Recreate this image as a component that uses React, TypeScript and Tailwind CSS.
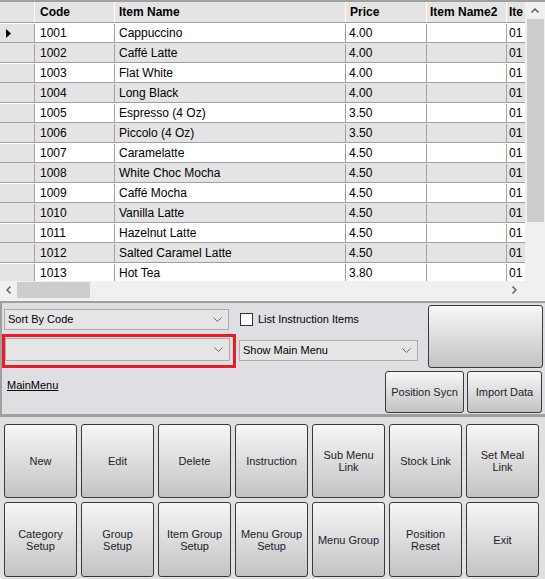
import React from 'react';

const items = [
  ['1001', 'Cappuccino', '4.00'],
  ['1002', 'Caffé Latte', '4.00'],
  ['1003', 'Flat White', '4.00'],
  ['1004', 'Long Black', '4.00'],
  ['1005', 'Espresso (4 Oz)', '3.50'],
  ['1006', 'Piccolo (4 Oz)', '3.50'],
  ['1007', 'Caramelatte', '4.50'],
  ['1008', 'White Choc Mocha', '4.50'],
  ['1009', 'Caffé Mocha', '4.50'],
  ['1010', 'Vanilla Latte', '4.50'],
  ['1011', 'Hazelnut Latte', '4.50'],
  ['1012', 'Salted Caramel Latte', '4.50'],
  ['1013', 'Hot Tea', '3.80'],
];

const buttons = [
  'New', 'Edit', 'Delete', 'Instruction', 'Sub Menu\nLink', 'Stock Link', 'Set Meal\nLink',
  'Category\nSetup', 'Group\nSetup', 'Item Group\nSetup', 'Menu Group\nSetup', 'Menu Group', 'Position\nReset', 'Exit',
];

const Chevron = () => (
  <svg width="9" height="6" viewBox="0 0 9 6">
    <path d="M0.5 0.5 L4.5 4.5 L8.5 0.5" fill="none" stroke="#6b6b6b" strokeWidth="1" />
  </svg>
);

const Combo: React.FC<{ text?: string; className: string }> = ({ text, className }) => (
  <div className={`flex items-center justify-between border border-[#acacac] bg-[#e5e5e5] pl-[3px] pr-[6px] text-[11px] text-black ${className}`}>
    <span>{text}</span>
    <Chevron />
  </div>
);

const WinButton: React.FC<{ label?: string; className: string }> = ({ label, className }) => (
  <div
    className={`flex items-center justify-center whitespace-pre-line rounded-[3px] border border-[#3a3a3a] bg-linear-to-b from-[#f7f7f7] to-[#c3c3c3] text-center text-[11px] leading-[12px] text-[#1e1a2a] ${className}`}
  >
    {label}
  </div>
);

const cell = 'flex shrink-0 items-center border-r border-b border-[#a0a0a0] overflow-hidden whitespace-nowrap';
const head = 'flex shrink-0 items-center border-r border-white overflow-hidden whitespace-nowrap font-bold';

const App: React.FC = () => {
  return (
    <div className="flex h-[579px] w-[545px] flex-col overflow-hidden bg-[#e0e0e3] font-['Liberation_Sans',Arial,sans-serif] text-black">
      {/* Data grid */}
      <div className="flex h-[281px] border-t-2 border-[#a0a0a0] bg-white">
        <div className="h-[279px] w-[525px] overflow-hidden text-[12px]">
          <div className="flex h-[21px] border-b border-[#a0a0a0] bg-[#e4e4e4]">
            <div className={`${head} w-[35px]`} />
            <div className={`${head} w-[80px] pl-[5px]`}>Code</div>
            <div className={`${head} w-[231px] pl-[4px]`}>Item Name</div>
            <div className={`${head} w-[81px] pl-[4px]`}>Price</div>
            <div className={`${head} w-[80px] pl-[3px]`}>Item Name2</div>
            <div className={`${head} w-[18px] border-r-0 pl-[2px]`}>Ite</div>
          </div>
          {items.map(([code, name, price], i) => (
            <div key={code} className={`flex h-[20px] pt-[1px] ${i % 2 ? 'bg-[#e4e4e4]' : 'bg-white'}`}>
              <div className={`${cell} w-[35px] bg-[#e4e4e4] pl-[6px]`}>
                {i === 0 && (
                  <svg width="5" height="9" viewBox="0 0 5 9">
                    <path d="M0 0 L5 4.5 L0 9 Z" fill="#000" />
                  </svg>
                )}
              </div>
              <div className={`${cell} w-[80px] pl-[5px]`}>{code}</div>
              <div className={`${cell} w-[231px] pl-[4px]`}>{name}</div>
              <div className={`${cell} w-[81px] pl-[3px]`}>{price}</div>
              <div className={`${cell} w-[80px]`} />
              <div className={`${cell} w-[18px] border-r-0 pl-[2px]`}>01</div>
            </div>
          ))}
        </div>
        {/* vertical scrollbar */}
        <div className="flex h-[279px] w-[20px] flex-col items-center bg-[#f0f0f0]">
          <div className="flex h-[17px] items-center justify-center">
            <svg width="8" height="5" viewBox="0 0 8 5">
              <path d="M0.5 4.5 L4 1 L7.5 4.5" fill="none" stroke="#606060" strokeWidth="1.5" />
            </svg>
          </div>
          <div className="h-[203px] w-[17px] bg-[#cdcdcd]" />
        </div>
      </div>

      {/* horizontal scrollbar */}
      <div className="flex h-[18px] items-center bg-[#f0f0f0]">
        <div className="flex w-[17px] justify-center">
          <svg width="5" height="8" viewBox="0 0 5 8">
            <path d="M4.5 0.5 L1 4 L4.5 7.5" fill="none" stroke="#606060" strokeWidth="1.5" />
          </svg>
        </div>
        <div className="h-[16px] w-[73px] bg-[#cdcdcd]" />
        <div className="ml-auto mr-[22px] flex w-[17px] justify-center">
          <svg width="5" height="8" viewBox="0 0 5 8">
            <path d="M0.5 0.5 L4 4 L0.5 7.5" fill="none" stroke="#606060" strokeWidth="1.5" />
          </svg>
        </div>
      </div>
      <div className="h-[2px] bg-[#f0f0f0]" />

      {/* Options panel */}
      <div className="flex h-[116px] flex-col border-t-2 border-b-[3px] border-l-2 border-[#a0a0a0] bg-[#dfdfe3]">
        <div className="flex h-[65px]">
          <div className="flex flex-col pt-[6px]">
            <div className="flex h-[21px] items-center">
              <Combo text="Sort By Code" className="ml-[2px] h-[21px] w-[225px]" />
              <div className="ml-[11px] h-[13px] w-[13px] border border-[#333] bg-white" />
              <span className="ml-[5px] text-[11px]">List Instruction Items</span>
            </div>
            <div className="mt-[4px] flex">
              <div className="h-[34px] w-[234px] border-[3px] border-[#ed1c24]">
                <Combo className="mt-[1px] h-[23px] w-[225px]" />
              </div>
              <Combo text="Show Main Menu" className="ml-[3px] mt-[6px] h-[21px] w-[179px]" />
            </div>
          </div>
          <WinButton className="ml-auto mr-[2px] mt-[2px] h-[63px] w-[115px]" />
        </div>
        <div className="flex h-[46px]">
          <span className="ml-[5px] mt-[9px] text-[11px] underline">MainMenu</span>
          <WinButton label="Position Sycn" className="ml-auto mt-[3px] h-[42px] w-[79px]" />
          <WinButton label="Import Data" className="ml-[3px] mr-[3px] mt-[3px] h-[42px] w-[75px]" />
        </div>
      </div>

      {/* Command buttons */}
      <div className="grid grid-cols-[repeat(7,73px)] grid-rows-[74px_75px] gap-[4px] pl-[4px] pt-[7px]">
        {buttons.map((b) => (
          <WinButton key={b} label={b} className="h-full w-full" />
        ))}
      </div>
    </div>
  );
};

export default App;
